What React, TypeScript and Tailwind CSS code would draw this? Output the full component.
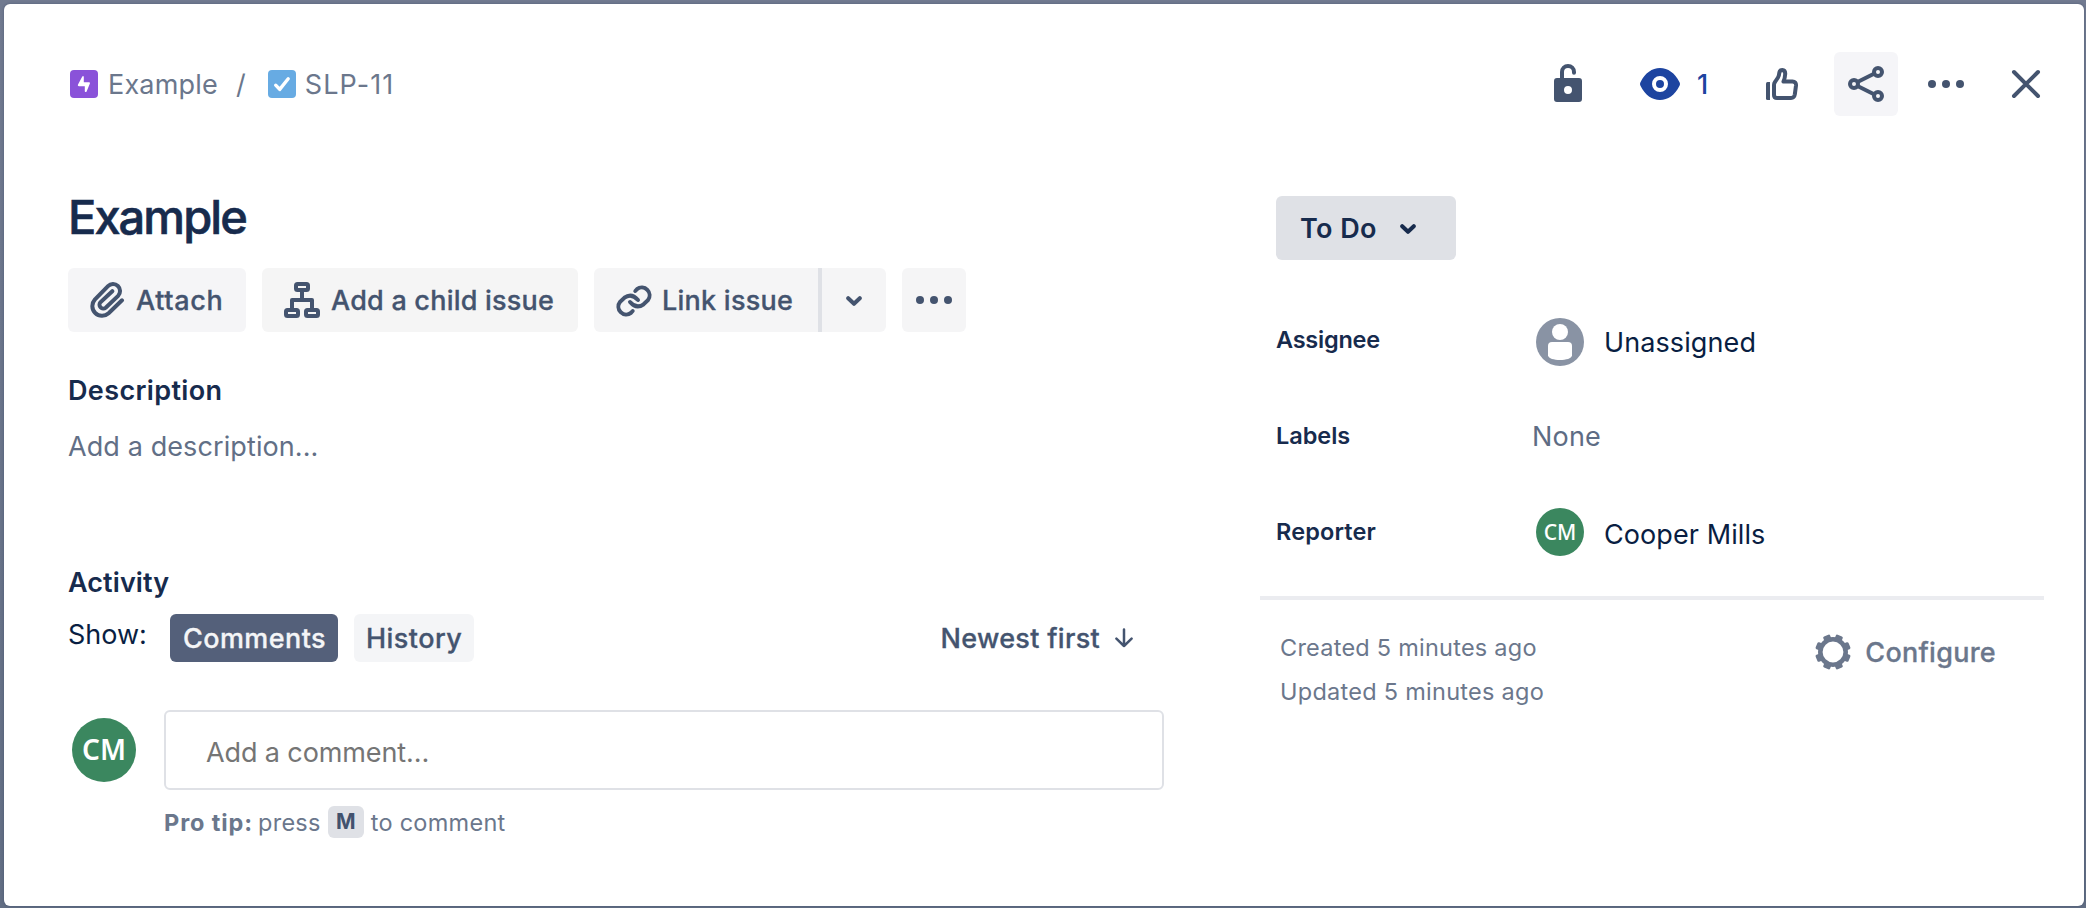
import type { ReactNode } from "react";

const toothAngles = [22.5, 67.5, 112.5, 157.5, 202.5, 247.5, 292.5, 337.5];

function EpicIcon() {
  return (
    <svg width="28" height="28" viewBox="0 0 28 28" className="shrink-0">
      <rect width="28" height="28" rx="4" fill="#8a52d9" />
      <path
        d="M12.3 6.600c.4-.9 1.500-.7 1.500.4v5.200h5c1 0 1.400.7 1 1.600l-3.200 7.600c-.4 1-1.800.8-1.800-.4v-4.800H9c-1 0-1.400-.7-1-1.600z"
        fill="#fff"
      />
    </svg>
  );
}

function TaskIcon() {
  return (
    <svg width="28" height="28" viewBox="0 0 28 28" className="shrink-0">
      <rect width="28" height="28" rx="4" fill="#67abe3" />
      <path d="M7.7 15.2l4 4.2 8.5-10.6" fill="none" stroke="#fff" strokeWidth="3.4" strokeLinecap="round" strokeLinejoin="round" />
    </svg>
  );
}

function UnlockIcon() {
  return (
    <svg width="64" height="64" viewBox="0 0 64 64">
      <path d="M26 28v-8a6 6 0 0 1 12 0v.7" fill="none" stroke="#44546f" strokeWidth="4" strokeLinecap="round" />
      <path
        fillRule="evenodd"
        d="M21 26h22a3 3 0 0 1 3 3v18a3 3 0 0 1-3 3H21a3 3 0 0 1-3-3V29a3 3 0 0 1 3-3zm11 8a4 4 0 1 0 0 8 4 4 0 0 0 0-8z"
        fill="#44546f"
      />
    </svg>
  );
}

function EyeIcon() {
  return (
    <svg width="40" height="32" viewBox="0 0 40 32" className="shrink-0">
      <path d="M.6 14C5.2 5 12 0 20 0s14.800 5 19.400 14a4 4 0 0 1 0 4C34.800 27 28 32 20 32S5.200 27 .6 18a4 4 0 0 1 0-4z" fill="#1d44a0" />
      <circle cx="20" cy="16" r="6" fill="#1d44a0" stroke="#fff" strokeWidth="4" />
    </svg>
  );
}

function ThumbIcon() {
  return (
    <svg width="64" height="64" viewBox="0 0 64 64" fill="none" stroke="#44546f" strokeWidth="4" strokeLinejoin="round">
      <path d="M16 31.500a1.500 1.500 0 0 1 1.500-1.500H20v18h-2.500a1.500 1.500 0 0 1-1.500-1.500z" fill="#44546f" stroke="none" />
      <path d="M24 33q0-1.700 1-3l3-4.500q1-1.500 1.200-4 .3-3.500 3-3.500 3.200.3 3 4-.2 4-1.700 7.600h9q3.800 0 3.500 3.900l-1.200 9q-.6 3.500-3.800 3.500H27q-3 0-3-3z" />
    </svg>
  );
}

function ShareIcon() {
  return (
    <svg width="64" height="64" viewBox="0 0 64 64" fill="none" stroke="#44546f" strokeWidth="4">
      <circle cx="20" cy="32" r="4" />
      <circle cx="44" cy="20" r="4" />
      <circle cx="44" cy="44" r="4" />
      <path d="M23.500 30l17-8.500M23.500 34l17 8.500" />
    </svg>
  );
}

function DotsIcon() {
  return (
    <svg width="64" height="64" viewBox="0 0 64 64" fill="#44546f">
      <circle cx="18" cy="32" r="4" />
      <circle cx="32" cy="32" r="4" />
      <circle cx="46" cy="32" r="4" />
    </svg>
  );
}

function CloseIcon() {
  return (
    <svg width="64" height="64" viewBox="0 0 64 64" fill="none" stroke="#44546f" strokeWidth="4" strokeLinecap="round">
      <path d="M20 20l24 24M44 20L20 44" />
    </svg>
  );
}

function AttachIcon() {
  return (
    <svg width="36" height="36" viewBox="0 0 36 36" fill="none" stroke="#44546f" strokeWidth="4" strokeLinecap="round" className="shrink-0">
      <path d="M32 18.300L18.600 31.200A9.700 9.700 0 0 1 4.800 17.600L18 4.200A7 7 0 0 1 28.100 13.900L15.700 25.700A3.800 3.800 0 0 1 10.400 20.300L22.300 9.200" />
    </svg>
  );
}

function ChildIssueIcon() {
  return (
    <svg width="36" height="36" viewBox="0 0 36 36" fill="none" stroke="#44546f" strokeWidth="4" className="shrink-0">
      <rect x="12" y="2" width="12" height="6" rx="1.500" />
      <rect x="2" y="28" width="12" height="6" rx="1.500" />
      <rect x="22" y="28" width="12" height="6" rx="1.500" />
      <path d="M18 9v9M8 27v-9h20v9" strokeLinejoin="round" />
    </svg>
  );
}

function LinkIcon() {
  return (
    <svg width="36" height="34" viewBox="0 0 36 34" fill="none" stroke="#44546f" strokeWidth="4" strokeLinecap="round" className="mt-0.5 shrink-0">
      <path d="M19.300 7L21 5.200A7.800 7.800 0 0 1 31.900 16.200L27.600 20.300Q20.500 25.500 14 18" />
      <path d="M16.700 27L15 28.800A7.800 7.800 0 0 1 4.100 17.800L8.400 13.700Q15.500 8.500 22 16" />
    </svg>
  );
}

function ChevronIcon() {
  return (
    <svg width="16" height="10" viewBox="0 0 16 10" fill="none" stroke="currentColor" strokeWidth="4" strokeLinecap="round" strokeLinejoin="round" className="mt-0.5 shrink-0">
      <path d="M2.200 2.200L8 7.800l5.800-5.600" />
    </svg>
  );
}

function ArrowDownIcon() {
  return (
    <svg width="18" height="20" viewBox="0 0 18 20" fill="none" stroke="#44546f" strokeWidth="2.500" strokeLinecap="round" strokeLinejoin="round" className="shrink-0">
      <path d="M9 1.500V18M1.400 10.600L9 18l7.600-7.400" />
    </svg>
  );
}

function PersonIcon() {
  return (
    <svg width="48" height="48" viewBox="0 0 48 48" className="ml-1 shrink-0">
      <circle cx="24" cy="24" r="24" fill="#8993a4" />
      <circle cx="24" cy="14" r="8" fill="#fff" />
      <path d="M16 24h16a4 4 0 0 1 4 4v9.500C35.500 40.500 30 42 24 42s-11.500-1.500-12-4.500V28a4 4 0 0 1 4-4z" fill="#fff" />
    </svg>
  );
}

function GearIcon() {
  return (
    <svg width="36" height="36" viewBox="-18 -18 36 36" className="shrink-0">
      <circle r="12.700" fill="none" stroke="#6b778c" strokeWidth="4.600" />
      {toothAngles.map((a) => (
        <rect key={a} x="-3.700" y="-17.800" width="7.400" height="6" rx="1.400" fill="#6b778c" transform={`rotate(${a})`} />
      ))}
    </svg>
  );
}

function FieldRow({ label, spacing, children }: { label: string; spacing: string; children: ReactNode }) {
  return (
    <div className="flex h-24 items-center pl-4">
      <div className={`w-64 pb-1 text-[23.5px] leading-8 font-semibold text-[#172b4d] ${spacing}`}>{label}</div>
      {children}
    </div>
  );
}

export default function App() {
  return (
    <div className="flex h-[908px] w-[2086px] bg-linear-to-b from-[#717a90] to-[#626e84] pt-1 pr-0.5 pb-0.5 pl-1 font-['Inter',sans-serif]">
      <div className="flex flex-1 flex-col rounded-md bg-white shadow-[0_0_3px_rgba(9,30,66,0.3)]">
        <header className="mt-12 flex h-16 items-center pr-[26px] pl-[66px] text-[27px] leading-8 text-[#6b778c]">
          <EpicIcon />
          <span className="ml-2.5 pt-0.5 tracking-[0.2px]">Example</span>
          <span className="ml-[18px] pt-0.5">/</span>
          <span className="ml-[22px] flex">
            <TaskIcon />
          </span>
          <span className="ml-[9px] pt-0.5 tracking-[1.1px]">SLP-11</span>
          <div className="ml-auto flex items-center">
            <button className="mr-6 size-16">
              <UnlockIcon />
            </button>
            <button className="mr-5 flex h-16 w-[106px] items-center pl-4 font-medium text-[#1d44a0]">
              <EyeIcon />
              <span className="ml-[17px] pt-0.5">1</span>
            </button>
            <button className="mr-5 size-16">
              <ThumbIcon />
            </button>
            <button className="mr-4 size-16 rounded-md bg-[#f5f5f8]">
              <ShareIcon />
            </button>
            <button className="mr-4 size-16">
              <DotsIcon />
            </button>
            <button className="size-16">
              <CloseIcon />
            </button>
          </div>
        </header>

        <div className="flex pl-16">
          <main className="w-[1096px]">
            <h1 className="mt-[73px] text-[47px] leading-14 font-medium tracking-[-1.95px] text-[#172b4d] [-webkit-text-stroke:0.6px]">Example</h1>

            <div className="mt-[23px] flex h-16 gap-4 text-[27px] leading-8 font-medium text-[#44546f] [-webkit-text-stroke:0.3px]">
              <button className="flex w-[178px] items-center rounded-md bg-[#f5f5f7] pl-[22px]">
                <AttachIcon />
                <span className="ml-2.5 pt-0.5 tracking-[0.65px]">Attach</span>
              </button>
              <button className="flex w-[316px] items-center rounded-md bg-[#f5f5f5] pl-[22px]">
                <ChildIssueIcon />
                <span className="ml-[11px] pt-0.5 tracking-[0.22px] whitespace-nowrap">Add a child issue</span>
              </button>
              <div className="flex">
                <button className="flex w-56 items-center rounded-l-md bg-[#f5f5f6] pl-[22px]">
                  <LinkIcon />
                  <span className="ml-2.5 pt-0.5 tracking-[0.25px] whitespace-nowrap">Link issue</span>
                </button>
                <div className="w-1 bg-[#dfe1e6]" />
                <button className="flex w-16 items-center justify-center rounded-r-md bg-[#f5f5f6]">
                  <ChevronIcon />
                </button>
              </div>
              <button className="size-16 rounded-md bg-[#f5f5f6]">
                <DotsIcon />
              </button>
            </div>

            <h2 className="mt-[43px] text-[27px] leading-8 font-semibold tracking-[0.36px] text-[#172b4d]">Description</h2>
            <p className="mt-6 text-[27px] leading-8 tracking-[0.1px] text-[#626f86]">Add a description...</p>

            <h2 className="mt-[104px] text-[27px] leading-8 font-semibold tracking-[0.08px] text-[#172b4d]">Activity</h2>
            <div className="mt-[15px] flex h-12 text-[27px] font-medium text-[#44546f]">
              <span className="w-[102px] leading-[42px] font-normal text-[#091e42]">Show:</span>
              <button className="w-42 rounded-md bg-[#54607a] pt-0.5 pl-[13px] text-left leading-[46px] tracking-[0.41px] text-[#f4f5f7] [-webkit-text-stroke:0.3px]">
                Comments
              </button>
              <button className="ml-4 w-30 rounded-md bg-[#f4f5f7] pt-0.5 pl-3 text-left leading-[46px] tracking-[0.45px] [-webkit-text-stroke:0.3px]">
                History
              </button>
              <button className="mr-[31px] ml-auto flex items-center gap-[15px] [-webkit-text-stroke:0.3px]">
                <span className="pt-0.5 tracking-[0.3px]">Newest first</span>
                <ArrowDownIcon />
              </button>
            </div>

            <div className="mt-12 flex pl-1">
              <div className="mt-2 mr-7 flex size-16 items-center justify-center rounded-full bg-[#3b875f] pb-0.5 font-['Noto_Sans',sans-serif] text-[28px] leading-8 font-semibold text-white">
                CM
              </div>
              <div className="flex h-20 flex-1 items-center rounded-md border-2 border-[#dfe1e6] pt-1.5 pl-10 text-[27px] leading-8 tracking-[-0.12px] text-[#757575]">
                Add a comment…
              </div>
            </div>
            <div className="mt-4 flex h-8 items-center pl-24 text-[23.5px] leading-8 text-[#6b778c]">
              <b className="pt-px font-bold tracking-[0.9px]">Pro tip:</b>
              <span className="ml-[5px] pt-px tracking-[0.26px]">press</span>
              <kbd className="mx-[7px] flex h-8 w-9 items-center justify-center rounded-md bg-[#dfe1e6] font-['Inter',sans-serif] text-[21px] font-bold text-[#42526e]">
                M
              </kbd>
              <span className="pt-px tracking-[0.27px]">to comment</span>
            </div>
          </main>

          <aside className="ml-24 w-[784px] pt-20">
            <button className="ml-4 flex h-16 w-[180px] items-center rounded-md bg-[#dfe1e6] pl-6 text-[27px] leading-8 font-semibold text-[#172b4d]">
              <span className="w-25 pt-0.5 text-left tracking-[0.39px]">To Do</span>
              <ChevronIcon />
            </button>
            <div className="mt-[34px] text-[27px] leading-8 text-[#091e42]">
              <FieldRow label="Assignee" spacing="tracking-[-0.24px]">
                <PersonIcon />
                <span className="ml-5 pt-0.5 tracking-[0.1px]">Unassigned</span>
              </FieldRow>
              <FieldRow label="Labels" spacing="tracking-[-0.05px]">
                <span className="pb-0.5 tracking-[0.2px] text-[#5e6c84]">None</span>
              </FieldRow>
              <FieldRow label="Reporter" spacing="tracking-[0.12px]">
                <div className="mb-1 ml-1 flex size-12 items-center justify-center rounded-full bg-[#3b875f] font-['Noto_Sans',sans-serif] text-[21px] font-medium text-white">
                  CM
                </div>
                <span className="ml-5 pt-0.5 tracking-[0.08px]">Cooper Mills</span>
              </FieldRow>
            </div>
            <div className="mt-3.5 h-1 bg-[#ebecf0]" />
            <div className="mt-[26px] flex justify-between pr-12 pl-5 text-[#6b778c]">
              <div className="text-[23.5px] leading-11">
                <p className="tracking-[0.24px]">Created 5 minutes ago</p>
                <p className="tracking-[0.27px]">Updated 5 minutes ago</p>
              </div>
              <button className="mt-2 flex h-9 items-center text-[27px] leading-8 font-medium [-webkit-text-stroke:0.3px]">
                <GearIcon />
                <span className="ml-3.5 pt-0.5 tracking-[0.27px]">Configure</span>
              </button>
            </div>
          </aside>
        </div>
      </div>
    </div>
  );
}
